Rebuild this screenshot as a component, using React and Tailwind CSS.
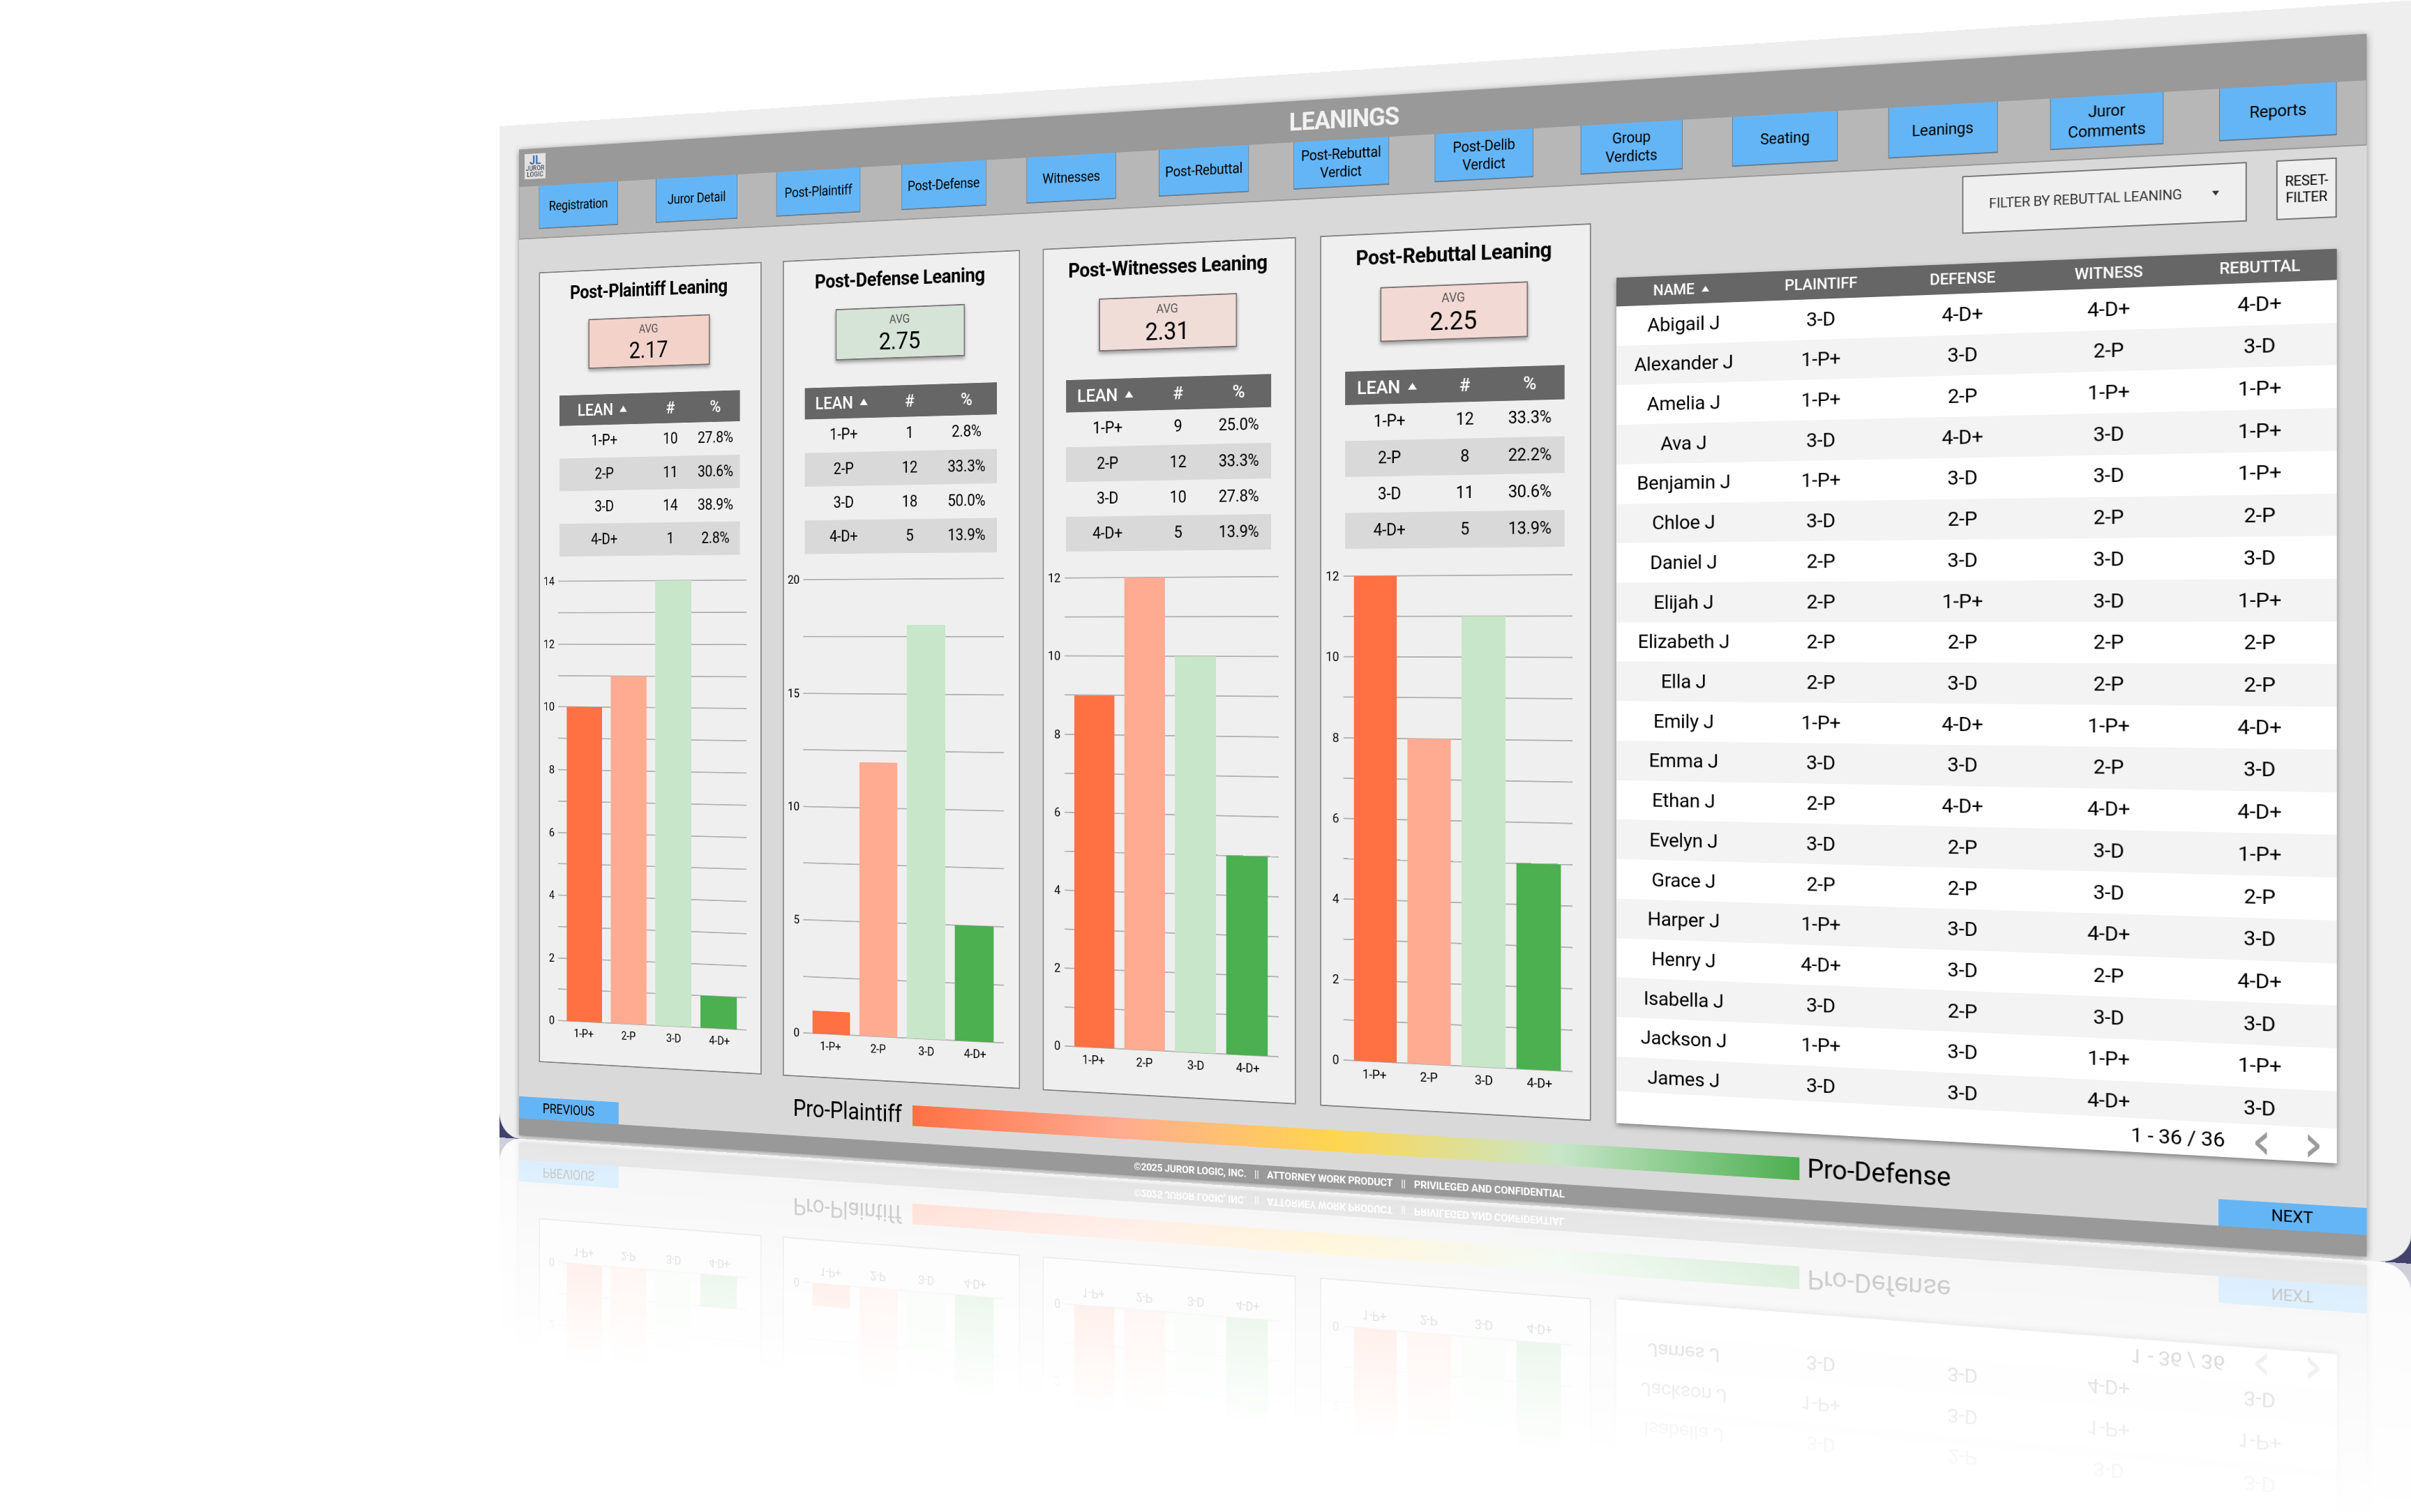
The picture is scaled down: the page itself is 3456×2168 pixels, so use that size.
const navItems = [
  "Registration",
  "Juror Detail",
  "Post-Plaintiff",
  "Post-Defense",
  "Witnesses",
  "Post-Rebuttal",
  "Post-Rebuttal Verdict",
  "Post-Delib Verdict",
  "Group Verdicts",
  "Seating",
  "Leanings",
  "Juror Comments",
  "Reports",
];

const leans = ["1-P+", "2-P", "3-D", "4-D+"];
const barColors = [
  "bg-[#ff7043]",
  "bg-[#ffab91]",
  "bg-[#c8e6c9]",
  "bg-[#4caf50]",
];

const cards = [
  {
    title: "Post-Plaintiff Leaning",
    avg: "2.17",
    avgBg: "bg-[#f3d2ca]",
    cols: "grid-cols-[186px_84px_97px]",
    counts: [10, 11, 14, 1],
    percents: ["27.8%", "30.6%", "38.9%", "2.8%"],
    max: 14,
    step: 1,
  },
  {
    title: "Post-Defense Leaning",
    avg: "2.75",
    avgBg: "bg-[#d5e4d6]",
    cols: "grid-cols-[152px_102px_113px]",
    counts: [1, 12, 18, 5],
    percents: ["2.8%", "33.3%", "50.0%", "13.9%"],
    max: 20,
    step: 2.5,
  },
  {
    title: "Post-Witnesses Leaning",
    avg: "2.31",
    avgBg: "bg-[#f1ddd8]",
    cols: "grid-cols-[152px_102px_113px]",
    counts: [9, 12, 10, 5],
    percents: ["25.0%", "33.3%", "27.8%", "13.9%"],
    max: 12,
    step: 1,
  },
  {
    title: "Post-Rebuttal Leaning",
    avg: "2.25",
    avgBg: "bg-[#f3d9d3]",
    cols: "grid-cols-[152px_102px_113px]",
    counts: [12, 8, 11, 5],
    percents: ["33.3%", "22.2%", "30.6%", "13.9%"],
    max: 12,
    step: 1,
  },
];

const jurors = [
  ["Abigail J", "3-D", "4-D+", "4-D+", "4-D+"],
  ["Alexander J", "1-P+", "3-D", "2-P", "3-D"],
  ["Amelia J", "1-P+", "2-P", "1-P+", "1-P+"],
  ["Ava J", "3-D", "4-D+", "3-D", "1-P+"],
  ["Benjamin J", "1-P+", "3-D", "3-D", "1-P+"],
  ["Chloe J", "3-D", "2-P", "2-P", "2-P"],
  ["Daniel J", "2-P", "3-D", "3-D", "3-D"],
  ["Elijah J", "2-P", "1-P+", "3-D", "1-P+"],
  ["Elizabeth J", "2-P", "2-P", "2-P", "2-P"],
  ["Ella J", "2-P", "3-D", "2-P", "2-P"],
  ["Emily J", "1-P+", "4-D+", "1-P+", "4-D+"],
  ["Emma J", "3-D", "3-D", "2-P", "3-D"],
  ["Ethan J", "2-P", "4-D+", "4-D+", "4-D+"],
  ["Evelyn J", "3-D", "2-P", "3-D", "1-P+"],
  ["Grace J", "2-P", "2-P", "3-D", "2-P"],
  ["Harper J", "1-P+", "3-D", "4-D+", "3-D"],
  ["Henry J", "4-D+", "3-D", "2-P", "4-D+"],
  ["Isabella J", "3-D", "2-P", "3-D", "3-D"],
  ["Jackson J", "1-P+", "3-D", "1-P+", "1-P+"],
  ["James J", "3-D", "3-D", "4-D+", "3-D"],
];

function SortArrow({ className }) {
  return (
    <svg
      viewBox="0 0 14 11"
      preserveAspectRatio="none"
      className={className}
      fill="currentColor"
    >
      <path d="M7 0 14 11H0z" />
    </svg>
  );
}

function PageArrow({ className }) {
  return (
    <svg viewBox="0 0 16 34" className={className} fill="#9a9a9a">
      <path d="M16 0v8.3L5.8 17 16 25.7V34L0 19.2v-4.4z" />
    </svg>
  );
}

function Header() {
  return (
    <header className="grid h-[67px] shrink-0 grid-cols-[1fr_auto_1fr] items-center bg-[#999999]">
      <div className="ml-3 mt-[-4px] flex h-[45px] w-[44px] flex-col items-center justify-center bg-[#e2e2e2] tracking-normal">
        <span className="text-[22px] font-bold leading-[19px] text-[#3d6ea6]">
          JL
        </span>
        <span className="text-[12.3px] font-medium leading-[11px] text-[#4d5358]">
          JUROR
        </span>
        <span className="text-[12.3px] font-medium leading-[11px] text-[#4d5358]">
          LOGIC
        </span>
      </div>
      <h1 className="text-[41.5px] font-bold leading-none tracking-[-0.03em] text-[#f2f2f2]">
        LEANINGS
      </h1>
    </header>
  );
}

function NavBar() {
  return (
    <nav className="grid h-[94px] shrink-0 grid-cols-[241.2px_241.1px_242.3px_235.8px_240.7px_237.5px_241.5px_240.9px_242.3px_240.4px_241.5px_243.1px_164px] border-x border-b-2 border-[#9a9a9a] bg-[#b7b7b7] pl-[41px]">
      {navItems.map((item, i) => (
        <div
          key={item}
          className={`flex h-[77px] items-center justify-center border-x-[1.5px] border-b-2 border-[#6e7a86] bg-[#64b5f6] text-center text-[23.3px] leading-[29px] ${
            i === 3 || i === 5 ? "w-[160px]" : "w-[164px] px-2"
          }`}
        >
          {item}
        </div>
      ))}
    </nav>
  );
}

function LeanTable({ card }) {
  return (
    <div className="mx-auto w-[367px] text-center text-[26.9px]">
      <div
        className={`grid h-[54px] items-center bg-[#666666] text-[30px] font-medium text-white ${card.cols}`}
      >
        <span className="flex items-center justify-center gap-[13px] pr-[9px]">
          LEAN
          <SortArrow className="h-[11px] w-[15px]" />
        </span>
        <span>#</span>
        <span>%</span>
      </div>
      {leans.map((lean, i) => (
        <div
          key={lean}
          className={`grid h-[58.2px] items-center pb-[2px] ${card.cols} ${
            i % 2 ? "bg-[#d9d9d9]" : ""
          }`}
        >
          <span>{lean}</span>
          <span>{card.counts[i]}</span>
          <span>{card.percents[i]}</span>
        </div>
      ))}
    </div>
  );
}

function BarChart({ card }) {
  const lines = [];
  for (let v = card.max; v >= 0; v -= card.step) lines.push(v);

  return (
    <div className="relative ml-[40px] mt-[44px] h-[781px] w-[383px]">
      <div className="absolute inset-0 flex flex-col justify-between">
        {lines.map((v, i) => (
          <div key={v} className="relative h-0">
            <div className="absolute inset-x-0 -top-px h-[2px] bg-[#b0b0b0]" />
            {i % 2 === 0 && (
              <span className="absolute right-full -top-[12px] mr-[7px] text-[20.8px] leading-[24px]">
                {v}
              </span>
            )}
          </div>
        ))}
      </div>
      <div className="relative flex h-full items-end justify-between px-[18px]">
        {card.counts.map((count, i) => (
          <div
            key={leans[i]}
            className={`w-[73px] ${barColors[i]}`}
            style={{ height: `${(count / card.max) * 100}%` }}
          />
        ))}
      </div>
      <div className="relative mt-[9px] flex justify-between px-[17px] text-center text-[20.6px] leading-[24px]">
        {leans.map((lean) => (
          <span key={lean} className="w-[73px]">
            {lean}
          </span>
        ))}
      </div>
    </div>
  );
}

function LeaningCard({ card }) {
  return (
    <section className="flex h-[1408px] w-[453px] shrink-0 flex-col bg-[#efefef] outline-2 -outline-offset-2 outline-[#808080]">
      <h2 className="mt-[17px] pr-[2px] text-center text-[33.6px] font-bold leading-[44px] tracking-[-0.014em]">
        {card.title}
      </h2>
      <div
        className={`mx-auto mt-[26px] mb-[45.5px] flex h-[88px] w-[247px] flex-col items-center border-2 border-[#777070] pt-[7px] shadow-[0_4px_6px_rgba(0,0,0,0.35)] ${card.avgBg}`}
      >
        <span className="text-[20.6px] leading-[24px] text-[#555555]">AVG</span>
        <span className="mt-[3px] text-[41px] leading-[44px]">{card.avg}</span>
      </div>
      <LeanTable card={card} />
      <BarChart card={card} />
    </section>
  );
}

function Filters() {
  return (
    <div className="flex h-[87px] justify-end gap-[41px]">
      <div className="flex w-[412px] items-center justify-between border-2 border-[#777777] bg-[#efefef] pl-[38px] pr-[37px] text-[20.6px] text-[#333333]">
        FILTER BY REBUTTAL LEANING
        <SortArrow className="h-[7px] w-[10px] rotate-180" />
      </div>
      <div className="flex w-[84px] items-center justify-center border-2 border-[#777777] bg-[#efefef] text-center text-[19.6px] leading-[23.5px]">
        RESET-
        <br />
        FILTER
      </div>
    </div>
  );
}

function JurorTable() {
  return (
    <section className="mt-[45px] flex h-[1322px] w-[1073px] flex-col bg-white shadow-[0_4px_8px_rgba(0,0,0,0.4)]">
      <div className="grid h-[45px] shrink-0 grid-cols-5 items-center bg-[#666666] text-center text-[23.6px] font-medium text-white">
        <span className="flex items-center justify-center gap-[11px] pr-[8px]">
          NAME
          <SortArrow className="h-[9px] w-[12px]" />
        </span>
        <span>PLAINTIFF</span>
        <span>DEFENSE</span>
        <span>WITNESS</span>
        <span>REBUTTAL</span>
      </div>
      <div className="h-[1227px] shrink-0 overflow-hidden text-center text-[30.4px]">
        {jurors.map((row, i) => (
          <div
            key={row[0]}
            className={`grid h-[61.72px] grid-cols-5 items-center pb-px ${
              i % 2 ? "bg-[#f3f3f3]" : "bg-white"
            }`}
          >
            {row.map((cell, j) => (
              <span key={j}>{cell}</span>
            ))}
          </div>
        ))}
      </div>
      <div className="flex flex-1 items-center justify-end pr-[24px] text-[30.4px]">
        1 - 36 / 36
        <PageArrow className="ml-[43px] mt-[4px] h-[34px] w-[16px]" />
        <PageArrow className="ml-[57px] mt-[4px] h-[34px] w-[16px] rotate-180" />
      </div>
    </section>
  );
}

function BottomBar() {
  return (
    <div className="flex flex-1 items-end">
      <div className="flex h-[39px] w-[207px] items-center justify-center bg-[#64b5f6] text-[23.5px]">
        PREVIOUS
      </div>
      <div className="mb-[29px] ml-[350px] flex h-[35px] items-center text-[40.4px] leading-none">
        <span className="w-[231px]">Pro-Plaintiff</span>
        <div className="h-[35px] w-[1522px] bg-[linear-gradient(90deg,#ff7043,#ffab91_25%,#ffd54f_50%,#c8e6c9_75%,#4caf50)]" />
        <span className="ml-[12px]">Pro-Defense</span>
      </div>
      <div className="ml-auto flex h-[39px] w-[206px] items-center justify-center bg-[#64b5f6] text-[23.5px]">
        NEXT
      </div>
    </div>
  );
}

function Footer() {
  return (
    <footer className="flex h-[31px] shrink-0 items-center justify-center gap-[14px] bg-[#999999] text-[17.1px] font-bold leading-none text-white">
      <span>©2025 JUROR LOGIC, INC.</span>
      <span className="font-medium">||</span>
      <span>ATTORNEY WORK PRODUCT</span>
      <span className="font-medium">||</span>
      <span>PRIVILEGED AND CONFIDENTIAL</span>
    </footer>
  );
}

function Board() {
  return (
    <div className="h-[1812px] w-[3237px] bg-[#42426f]">
      <div className="h-full overflow-hidden rounded-b-[44px] bg-[#eeeeee] pl-[41px] pt-[44px]">
        <div className="flex h-[1762px] w-[3135px] flex-col bg-[#d9d9d9] shadow-[0_2px_10px_rgba(0,0,0,0.4)]">
          <Header />
          <NavBar />
          <main className="flex shrink-0 gap-[41.5px] pl-[41.5px]">
            <div className="flex gap-[42px] pt-[60px]">
              {cards.map((card) => (
                <LeaningCard key={card.title} card={card} />
              ))}
            </div>
            <div className="pt-[15px]">
              <Filters />
              <JurorTable />
            </div>
          </main>
          <BottomBar />
          <Footer />
        </div>
      </div>
    </div>
  );
}

export default function App() {
  return (
    <div className="relative h-[2168px] w-[3456px] overflow-hidden bg-white font-['Roboto',sans-serif] tracking-[-0.014em] text-black">
      <div className="w-[3237px] origin-top-left [transform:matrix3d(0.63356,-0.055808,0,-0.00006166,0,0.80022,0,0,0,0,1,0,716,181,0,1)]">
        <Board />
        {/* floor reflection */}
        <div
          aria-hidden="true"
          className="h-[390px] overflow-hidden [mask-image:linear-gradient(to_bottom,rgba(0,0,0,0.26),rgba(0,0,0,0.1)_55%,transparent)]"
        >
          <div className="-scale-y-100">
            <Board />
          </div>
        </div>
      </div>
    </div>
  );
}
